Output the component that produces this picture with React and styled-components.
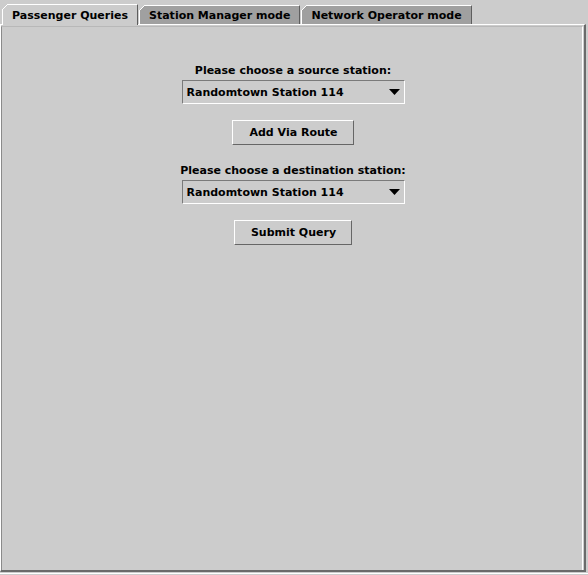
import React from 'react';
import styled, { createGlobalStyle } from 'styled-components';

const Global = createGlobalStyle`
  html, body {
    margin: 0;
    padding: 0;
    background: #cccccc;
  }
  * {
    box-sizing: border-box;
  }
`;

const Frame = styled.div`
  width: 588px;
  height: 575px;
  background: #cccccc;
  display: flex;
  flex-direction: column;
  font-family: "DejaVu Sans", Verdana, sans-serif;
  font-weight: bold;
  font-size: 11px;
  color: #000;
  overflow: hidden;
`;

const TabRow = styled.div`
  display: flex;
  align-items: flex-end;
  gap: 1px;
  height: 24px;
  padding-left: 2px;
  position: relative;
  z-index: 1;
`;

const Tab = styled.div`
  position: relative;
  height: ${props => props.selected ? '21px' : '19px'};
  margin-bottom: ${props => props.selected ? '-1px' : '0'};
  padding: 0 9px;
  display: flex;
  align-items: center;
  background: ${props => props.selected ? '#cccccc' : '#a0a0a0'};
  border-top: 1px solid #ffffff;
  border-left: 1px solid #ffffff;
  border-right: 1px solid #5e5e5e;
  white-space: nowrap;
  &::before {
    content: '';
    position: absolute;
    top: -1px;
    left: -1px;
    width: 6px;
    height: 6px;
    background: linear-gradient(to bottom right, #cccccc 0 calc(50% - 0.6px), #ffffff calc(50% - 0.6px) calc(50% + 0.6px), transparent calc(50% + 0.6px));
  }
`;

const Content = styled.div`
  width: 586px;
  height: 548px;
  border-top: 1px solid #ffffff;
  border-left: 1px solid #ffffff;
  border-right: 2px solid #6a6a6a;
  border-bottom: 2px solid #6a6a6a;
  padding: 1px 1px 0 0;
`;

const Inner = styled.div`
  height: 100%;
  border-left: 1px solid #8a8a8a;
  border-top: 1px solid #b8b8b8;
  border-right: 1px solid #ffffff;
  display: flex;
  flex-direction: column;
  align-items: center;
  padding-top: 37px;
  padding-left: 2px;
`;

const BottomEdge = styled.div`
  height: 1px;
  margin-top: 1px;
  width: 588px;
  background: #ffffff;
`;

const Label = styled.div`
  height: 13px;
  line-height: 13px;
  white-space: nowrap;
  margin-top: ${props => props.gap || 0}px;
`;

const Combo = styled.div`
  width: 223px;
  height: 24px;
  margin-top: 3px;
  border-top: 1px solid #7a7a7a;
  border-left: 1px solid #7a7a7a;
  border-right: 1px solid #ffffff;
  border-bottom: 1px solid #ffffff;
  display: flex;
  align-items: center;
  justify-content: space-between;
  padding: 0 4px 0 4px;
`;

const Arrow = styled.svg`
  width: 11px;
  height: 6px;
  display: block;
`;

const Button = styled.div`
  height: 25px;
  margin-top: 16px;
  padding: 0 15px 0 16px;
  display: flex;
  align-items: center;
  justify-content: center;
  border-top: 1px solid #ffffff;
  border-left: 1px solid #ffffff;
  border-right: 1px solid #666666;
  border-bottom: 1px solid #666666;
  white-space: nowrap;
`;

const StationBox = ({ value }) => (
  <Combo>
    <span>{value}</span>
    <Arrow viewBox="0 0 11 6">
      <polygon points="0,0 11,0 5.5,6" fill="#000" />
    </Arrow>
  </Combo>
);

const tabs = ['Passenger Queries', 'Station Manager mode', 'Network Operator mode'];

export default function App() {
  return (
    <Frame>
      <Global />
      <TabRow>
        {tabs.map((t, i) => (
          <Tab key={t} selected={i === 0}>{t}</Tab>
        ))}
      </TabRow>
      <Content>
        <Inner>
          <Label>Please choose a source station:</Label>
          <StationBox value="Randomtown Station 114" />
          <Button>Add Via Route</Button>
          <Label gap={19}>Please choose a destination station:</Label>
          <StationBox value="Randomtown Station 114" />
          <Button>Submit Query</Button>
        </Inner>
      </Content>
      <BottomEdge />
    </Frame>
  );
}
